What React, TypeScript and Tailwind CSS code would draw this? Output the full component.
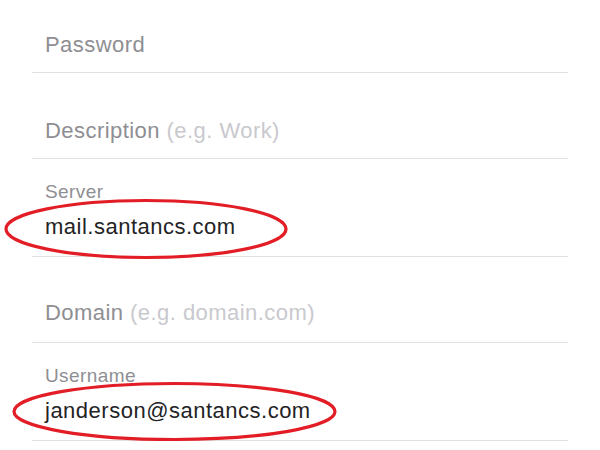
const font = { fontFamily: '"Liberation Sans", Arial, sans-serif' };

function SimpleRow({ label, hint, height, pb }: { label: string; hint?: string; height: string; pb: string }) {
  return (
    <div className={`flex items-end border-b border-[#e1e1e3] pl-[13px] ${height} ${pb}`}>
      <span className="text-[22px] leading-[28px] tracking-[0.45px] text-[#8e8e93]">
        {label}
        {hint && <span className="text-[#c9c9ce]"> {hint}</span>}
      </span>
    </div>
  );
}

function ValueRow({ label, value }: { label: string; value: string }) {
  return (
    <div className="flex h-[98px] flex-col justify-end border-b border-[#e1e1e3] pb-[15px] pl-[13px]">
      <span className="mb-[10px] text-[19px] leading-[22px] tracking-[0.4px] text-[#8e8e93]">{label}</span>
      <span className="text-[22px] leading-[28px] tracking-[0.5px] text-[#232325]">{value}</span>
    </div>
  );
}

export default function App() {
  return (
    <div className="relative h-[450px] w-[600px] overflow-hidden bg-white" style={font}>
      <div className="flex flex-col px-[32px]">
        <SimpleRow label="Password" height="h-[73px]" pb="pb-[13px]" />
        <SimpleRow label="Description" hint="(e.g. Work)" height="h-[86px]" pb="pb-[13px]" />
        <ValueRow label="Server" value="mail.santancs.com" />
        <SimpleRow label="Domain" hint="(e.g. domain.com)" height="h-[86px]" pb="pb-[15px]" />
        <ValueRow label="Username" value="janderson@santancs.com" />
      </div>

      {/* red annotation circles drawn over the form */}
      <svg className="pointer-events-none absolute inset-0" width="600" height="450" viewBox="0 0 600 450">
        <ellipse cx="146" cy="229" rx="140" ry="28.5" fill="none" stroke="#e31d25" strokeWidth="3.2" />
        <ellipse cx="174.5" cy="411.5" rx="160.5" ry="28" fill="none" stroke="#e31d25" strokeWidth="3.2" />
      </svg>
    </div>
  );
}
